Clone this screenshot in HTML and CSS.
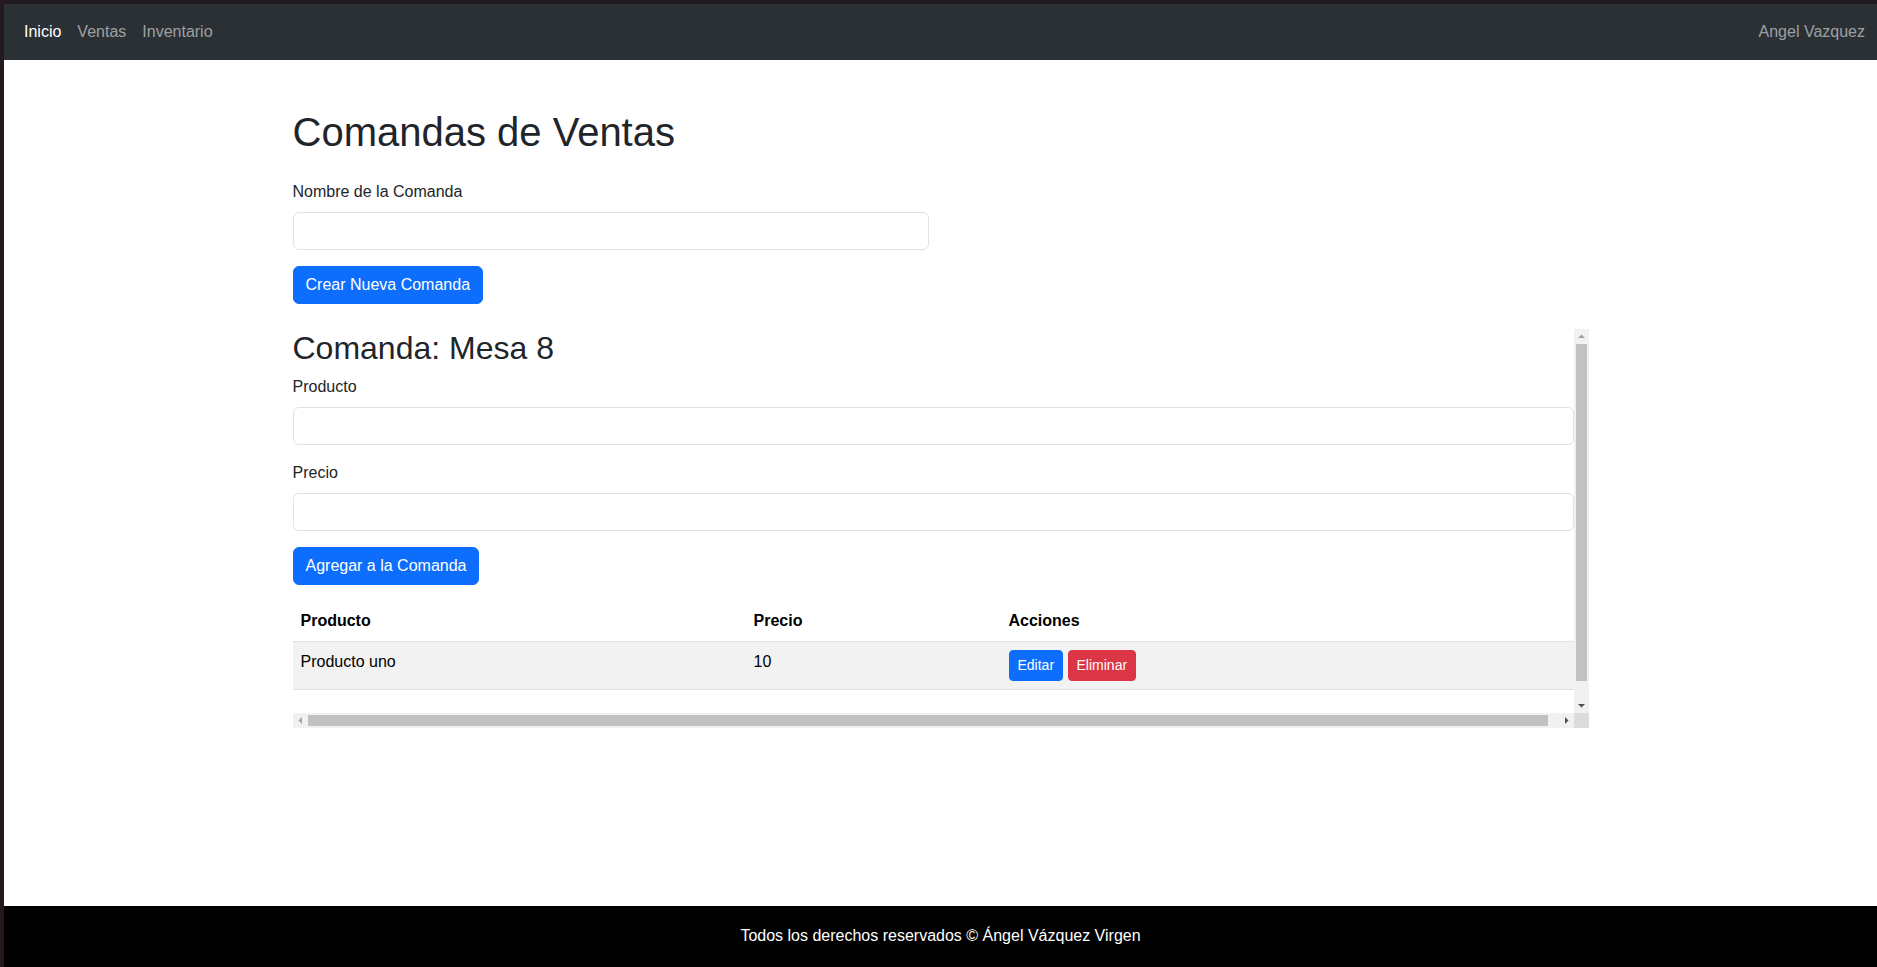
FILE: index.html
```html
<!DOCTYPE html>
<html lang="es">
<head>
<meta charset="utf-8">
<title>Comandas de Ventas</title>
<link rel="stylesheet" href="styles.css">
</head>
<body>
<div class="page">
  <nav class="navbar">
    <ul class="nav-links">
      <li><a class="nav-link active" href="#">Inicio</a></li>
      <li><a class="nav-link" href="#">Ventas</a></li>
      <li><a class="nav-link" href="#">Inventario</a></li>
    </ul>
    <span class="navbar-text">Angel Vazquez</span>
  </nav>

  <main class="container">
    <h1 class="page-title">Comandas de Ventas</h1>
    <div class="form-stack create-form">
      <label class="form-label">Nombre de la Comanda</label>
      <input class="form-control" type="text">
      <button class="btn btn-primary">Crear Nueva Comanda</button>
    </div>

    <div class="scroll-box">
      <div class="scroll-view">
        <div class="order">
          <h2 class="order-title">Comanda: Mesa 8</h2>
          <div class="form-stack order-form">
            <label class="form-label">Producto</label>
            <input class="form-control" type="text">
            <label class="form-label">Precio</label>
            <input class="form-control" type="text">
            <button class="btn btn-primary">Agregar a la Comanda</button>
          </div>
          <table class="table">
            <colgroup>
              <col class="col-prod">
              <col class="col-price">
              <col class="col-actions">
            </colgroup>
            <thead>
              <tr><th>Producto</th><th>Precio</th><th>Acciones</th></tr>
            </thead>
            <tbody>
              <tr>
                <td>Producto uno</td>
                <td>10</td>
                <td><button class="btn btn-sm btn-primary">Editar</button> <button class="btn btn-sm btn-danger">Eliminar</button></td>
              </tr>
            </tbody>
          </table>
        </div>
      </div>
      <div class="vbar">
        <div class="sb-arrow"><svg width="15" height="15" viewBox="0 0 15 15"><polygon points="4,9 7.5,5.5 11,9" class="tri-off"/></svg></div>
        <div class="vtrack"><div class="vthumb"></div></div>
        <div class="sb-arrow"><svg width="15" height="15" viewBox="0 0 15 15"><polygon points="4,6 7.5,9.5 11,6" class="tri-on"/></svg></div>
      </div>
      <div class="hbar">
        <div class="sb-arrow"><svg width="15" height="15" viewBox="0 0 15 15"><polygon points="9,4 5.5,7.5 9,11" class="tri-off"/></svg></div>
        <div class="htrack"><div class="hthumb"></div></div>
        <div class="sb-arrow"><svg width="15" height="15" viewBox="0 0 15 15"><polygon points="6,4 9.5,7.5 6,11" class="tri-on"/></svg></div>
      </div>
      <div class="sb-corner"></div>
    </div>
  </main>

  <footer class="footer">Todos los derechos reservados © Ángel Vázquez Virgen</footer>
</div>
</body>
</html>
```

FILE: styles.css
```css
* { box-sizing: border-box; }

html, body {
  margin: 0;
  padding: 0;
}

body {
  background: #221a1f;
  padding: 4px 0 0 4px;
  font-family: "Liberation Sans", Arial, sans-serif;
  font-size: 16px;
  line-height: 1.5;
  color: #212529;
}

.page {
  min-height: calc(100vh - 4px);
  display: flex;
  flex-direction: column;
  background: #fff;
}

/* Navbar */
.navbar {
  height: 56px;
  background: #2b3035;
  display: flex;
  align-items: center;
  justify-content: space-between;
  padding: 8px 12px;
}

.nav-links {
  list-style: none;
  margin: 0;
  padding: 0;
  display: flex;
}

.nav-link {
  display: block;
  padding: 8px;
  line-height: 24px;
  color: rgba(255, 255, 255, 0.55);
  text-decoration: none;
}

.nav-link.active { color: #fff; }

.navbar-text {
  padding: 8px 0;
  line-height: 24px;
  color: rgba(255, 255, 255, 0.55);
}

/* Main */
.container {
  flex: 1;
  width: 1296px;
  margin: 0 auto;
}

.page-title {
  font-size: 40px;
  line-height: 1.2;
  font-weight: 500;
  margin: 48px 0 24px;
}

.form-stack {
  display: flex;
  flex-direction: column;
  align-items: flex-start;
}

.create-form {
  width: 636px;
  margin-bottom: 25px;
}

.order-form {
  margin-bottom: 16px;
}

.form-label {
  display: block;
  margin-bottom: 8px;
  line-height: 24px;
}

.form-control {
  align-self: stretch;
  display: block;
  height: 38px;
  border: 1px solid #dee2e6;
  border-radius: 6px;
  background: #fff;
  margin: 0 0 16px;
  padding: 6px 12px;
  font: inherit;
}

.btn {
  display: inline-block;
  font-family: inherit;
  font-size: 16px;
  line-height: 24px;
  padding: 6px 12px;
  border: 1px solid transparent;
  border-radius: 6px;
  color: #fff;
  cursor: pointer;
}

.btn-primary { background: #0d6efd; border-color: #0d6efd; }
.btn-danger { background: #dc3545; border-color: #dc3545; }

.btn-sm {
  font-size: 14px;
  line-height: 21px;
  padding: 4px 8px;
  border-radius: 4px;
}

/* Scroll box with drawn scrollbars */
.scroll-box {
  display: grid;
  grid-template-columns: 1fr 15px;
  grid-template-rows: 384px 15px;
}

.scroll-view {
  overflow: hidden;
}

.order-title {
  font-size: 32px;
  line-height: 1.2;
  font-weight: 500;
  margin: 0 0 8px;
}

.table {
  width: 1292px;
  border-collapse: collapse;
  table-layout: fixed;
  color: #000;
  margin-bottom: 16px;
}

.col-prod { width: 453px; }
.col-price { width: 255px; }

.table th,
.table td {
  text-align: left;
  vertical-align: top;
  padding: 8px;
  border-bottom: 1px solid #dee2e6;
}

.table th { font-weight: 700; }

.table tbody tr { background: #f2f2f2; }

.vbar {
  background: #f1f1f1;
  display: flex;
  flex-direction: column;
}

.sb-arrow {
  width: 15px;
  height: 15px;
  flex: none;
}

.sb-arrow svg { display: block; }

.tri-off { fill: #a3a3a3; }
.tri-on { fill: #505050; }

.vtrack {
  flex: 1;
  padding: 0 2px;
}

.vthumb {
  height: 337px;
  background: #c1c1c1;
}

.hbar {
  background: #f1f1f1;
  display: flex;
}

.htrack {
  flex: 1;
  padding: 2px 0;
}

.hthumb {
  width: 1240px;
  height: 11px;
  background: #c1c1c1;
}

.sb-corner {
  background: #dcdcdc;
}

/* Footer */
.footer {
  background: #000;
  color: #fff;
  text-align: center;
  padding: 18px 0 19px;
  line-height: 24px;
}
```
